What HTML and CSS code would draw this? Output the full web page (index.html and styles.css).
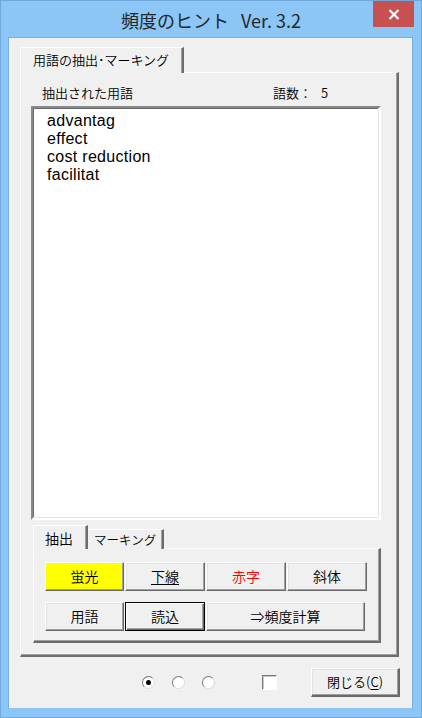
FILE: index.html
```html
<!DOCTYPE html>
<html lang="ja">
<head>
<meta charset="utf-8">
<title>頻度のヒント Ver. 3.2</title>
<link rel="stylesheet" href="styles.css">
</head>
<body>
<div class="window">
  <div class="titlebar">
    <div class="title-spacer"></div>
    <div class="title">頻度のヒント<span class="title-gap"></span>Ver. 3.2</div>
    <div class="title-right">
      <div class="close-x">
        <svg width="12" height="11" viewBox="0 0 12 11"><path d="M1.5 1 L10.5 10 M10.5 1 L1.5 10" stroke="#fff" stroke-width="2.2" fill="none"/></svg>
      </div>
    </div>
  </div>
  <div class="client">
    <div class="tabstrip outer-strip">
      <div class="tab tab-active outer-tab">用語の抽出･マーキング</div>
    </div>
    <div class="page outer-page">
      <div class="label-row">
        <span class="label">抽出された用語</span>
        <span class="count">語数：<span class="count-num">5</span></span>
      </div>
      <div class="listbox">
        <div class="item">advantag</div>
        <div class="item">effect</div>
        <div class="item">cost reduction</div>
        <div class="item">facilitat</div>
      </div>
      <div class="tabstrip inner-strip">
        <div class="tab tab-active inner-tab-a">抽出</div>
        <div class="tab tab-inactive inner-tab-b">マーキング</div>
      </div>
      <div class="page inner-page">
        <div class="btn-row">
          <div class="btn btn-yellow w78">蛍光</div>
          <div class="btn w80"><span class="u">下線</span></div>
          <div class="btn w80 red">赤字</div>
          <div class="btn w79">斜体</div>
        </div>
        <div class="btn-row row2">
          <div class="btn w78">用語</div>
          <div class="btn btn-default w80">読込</div>
          <div class="btn w159">⇒頻度計算</div>
        </div>
      </div>
    </div>
    <div class="footer">
      <div class="radio checked"><div class="dot"></div></div>
      <div class="radio"></div>
      <div class="radio"></div>
      <div class="checkbox"></div>
      <div class="btn close-btn">閉じる(<span class="u">C</span>)</div>
    </div>
  </div>
</div>
</body>
</html>
```
FILE: styles.css
```css
* { box-sizing: border-box; }
html, body { margin: 0; padding: 0; }
body {
  width: 422px;
  height: 718px;
  overflow: hidden;
  font-family: "Noto Sans CJK JP", "Noto Sans", sans-serif;
  font-weight: 350;
  color: #000;
}
.window {
  width: 422px;
  height: 718px;
  background: #8bc6f7;
  display: flex;
  flex-direction: column;
  border: 1px solid #6fa9dc;
}
.titlebar {
  height: 36px;
  display: grid;
  grid-template-columns: 1fr auto 1fr;
  align-items: start;
}
.title {
  font-size: 18px;
  line-height: 20px;
  color: #262626;
  margin-top: 9px;
  white-space: nowrap;
  font-weight: 400;
  display: flex;
}
.title-gap {
  width: 12px;
}
.title-right {
  display: flex;
  justify-content: flex-end;
}
.close-x {
  width: 41px;
  height: 26px;
  margin-right: 7px;
  background: #c75050;
  display: flex;
  align-items: center;
  justify-content: center;
}
.client {
  flex: 1;
  margin: 0 8px 8px 7px;
  background: #f0f0f0;
  border: 1px solid #79aedd;
  border-bottom-color: #8bc6f7;
  padding: 9px 0 0 11px;
  display: flex;
  flex-direction: column;
}
.tabstrip {
  display: flex;
  align-items: flex-end;
  position: relative;
  z-index: 1;
  margin-bottom: -1px;
}
.tab {
  background: #f0f0f0;
  font-size: 13px;
  line-height: 18px;
  white-space: nowrap;
  border-top: 1px solid #fff;
  border-left: 1px solid #fff;
  border-right: 2px solid #6d6d6d;
  box-shadow: inset -1px 0 #a0a0a0;
}
.outer-tab {
  width: 164px;
  height: 26px;
  padding: 3px 0 0 12px;
  border-top-left-radius: 2px;
}
.page {
  background: #f0f0f0;
  border-top: 1px solid #fff;
  border-left: 1px solid #fff;
  border-right: 2px solid #6d6d6d;
  border-bottom: 2px solid #6d6d6d;
  box-shadow: inset -1px -1px #a0a0a0;
}
.outer-page {
  width: 379px;
  height: 585px;
  padding: 11px 0 0 10px;
  display: flex;
  flex-direction: column;
}
.label-row {
  height: 18px;
  font-size: 13px;
  line-height: 18px;
  display: flex;
  margin-bottom: 4px;
}
.label {
  margin-left: 11px;
  width: 231px;
}
.count-num {
  margin-left: 9px;
}
.listbox {
  width: 350px;
  height: 414px;
  background: #fff;
  border-top: 2px solid #8a8a8a;
  border-left: 2px solid #8a8a8a;
  border-right: 2px solid #fff;
  border-bottom: 2px solid #fff;
  box-shadow: inset -1px -1px #e3e3e3, inset 1px 1px #696969;
  padding: 4px 0 0 14px;
  font-family: "Liberation Sans", Arial, sans-serif;
  font-weight: 400;
  font-size: 16px;
  line-height: 18px;
}
.item {
  height: 18px;
  letter-spacing: 0.3px;
}
.inner-strip {
  margin-top: 5px;
  margin-left: 2px;
}
.inner-tab-a {
  width: 55px;
  height: 24px;
  padding: 3px 0 0 11px;
  font-size: 14px;
}
.inner-tab-b {
  width: 76px;
  height: 20px;
  padding: 1px 0 0 6px;
  font-size: 12.5px;
  line-height: 18px;
  border-left: none;
}
.inner-page {
  width: 348px;
  height: 95px;
  margin-left: 2px;
  padding: 13px 0 0 11px;
  display: flex;
  flex-direction: column;
  gap: 11px;
}
.btn-row {
  display: flex;
  gap: 1px;
}
.btn {
  height: 29px;
  background: #f0f0f0;
  border-top: 1px solid #fff;
  border-left: 1px solid #fff;
  border-right: 1px solid #696969;
  border-bottom: 1px solid #696969;
  box-shadow: inset -1px -1px #a0a0a0, inset 1px 1px #e3e3e3;
  font-size: 14px;
  line-height: 26px;
  text-align: center;
  white-space: nowrap;
}
.btn-yellow {
  background: #ffff00;
  box-shadow: inset -1px -1px #a0a0a0;
}
.btn-default {
  border: 1px solid #000;
  box-shadow: inset 1px 1px #fff, inset -1px -1px #696969, inset -2px -2px #a0a0a0;
}
.w78 { width: 79px; }
.w80 { width: 80px; }
.w79 { width: 80px; }
.w159 { width: 159px; }
.red { color: #ff0000; }
.u { text-decoration: underline; text-underline-offset: 2px; }
.footer {
  display: flex;
  align-items: center;
  margin-top: 11px;
  height: 29px;
}
.radio {
  width: 13px;
  height: 13px;
  border-radius: 50%;
  background: #fff;
  border: 1px solid;
  border-color: #7a7a7a #dcdcdc #dcdcdc #7a7a7a;
  display: flex;
  align-items: center;
  justify-content: center;
  margin-right: 17px;
}
.radio:first-child {
  margin-left: 122px;
}
.dot {
  width: 5px;
  height: 5px;
  border-radius: 50%;
  background: #000;
}
.checkbox {
  width: 15px;
  height: 15px;
  margin-left: 30px;
  background: #fff;
  border: 1px solid;
  border-color: #7a7a7a #fff #fff #7a7a7a;
  box-shadow: inset 1px 1px #c8c8c8;
}
.close-btn {
  width: 89px;
  margin-left: 34px;
  font-size: 13px;
  line-height: 26px;
  border-right-width: 2px;
  border-bottom-width: 2px;
}
```
